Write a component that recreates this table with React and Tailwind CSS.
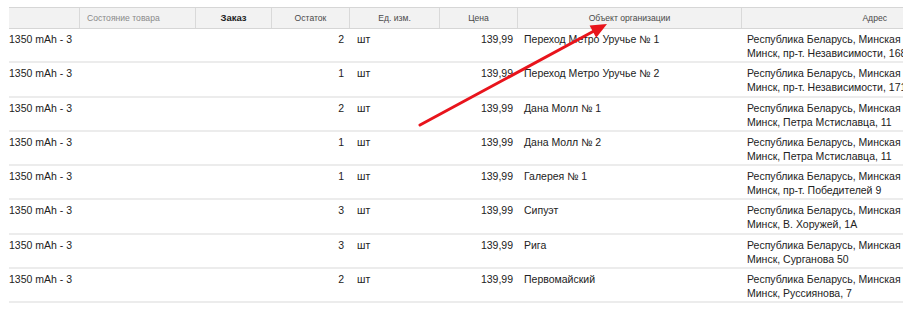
import React from "react";

const rows = [
  ["2", "Переход Метро Уручье № 1", "Минск, пр-т. Независимости, 168"],
  ["1", "Переход Метро Уручье № 2", "Минск, пр-т. Независимости, 171"],
  ["2", "Дана Молл № 1", "Минск, Петра Мстиславца, 11"],
  ["1", "Дана Молл № 2", "Минск, Петра Мстиславца, 11"],
  ["1", "Галерея № 1", "Минск, пр-т. Победителей 9"],
  ["3", "Сипуэт", "Минск, В. Хоружей, 1А"],
  ["3", "Рига", "Минск, Сурганова 50"],
  ["2", "Первомайский", "Минск, Руссиянова, 7"],
];

const cols = "grid grid-cols-[71px_116px_76px_78px_90px_78px_224px_240px]";

export default function App() {
  return (
    <div
      className="relative w-[903px] h-[320px] overflow-hidden bg-white text-[#222]"
      style={{ fontFamily: '"Liberation Sans", Arial, sans-serif' }}
    >
      <div className="pt-[7px] pl-[9px]">
        <div className={`${cols} w-max h-[22px] bg-[#f2f2f2] border-t border-b border-[#d6d6d6] text-[8.6px] leading-[20px] text-[#4a4a4a]`}>
          <div className="border-r border-[#d9d9d9]" />
          <div className="border-r border-[#d9d9d9] pl-[7px] text-[#8a8a8a] whitespace-nowrap">Состояние товара</div>
          <div className="border-r border-[#d9d9d9] text-center font-bold text-[#222] text-[9.5px]">Заказ</div>
          <div className="border-r border-[#d9d9d9] text-center">Остаток</div>
          <div className="border-r border-[#d9d9d9] text-center">Ед. изм.</div>
          <div className="border-r border-[#d9d9d9] text-center">Цена</div>
          <div className="border-r border-[#d9d9d9] text-center">Объект организации</div>
          <div className="text-right pr-[95px]">Адрес</div>
        </div>
        {rows.map((r, i) => (
          <div
            key={i}
            className={`${cols} w-max h-[34.25px] border-b-2 border-[#ececec] text-[10.5px] leading-[14px] pt-[3px]`}
          >
            <div className="whitespace-nowrap">1350 mAh - 3</div>
            <div />
            <div />
            <div className="text-right pr-[6px]">{r[0]}</div>
            <div className="pl-[7px]">шт</div>
            <div className="text-right pr-[5px]">139,99</div>
            <div className="pl-[6px] whitespace-nowrap">{r[1]}</div>
            <div className="pl-[5px] whitespace-nowrap">
              <div>Республика Беларусь, Минская обл.,</div>
              <div>{r[2]}</div>
            </div>
          </div>
        ))}
      </div>
      <svg className="absolute left-0 top-0 pointer-events-none" width="903" height="320">
        <line x1="420" y1="125" x2="594" y2="31" stroke="#e8141c" strokeWidth="3" strokeLinecap="round" />
        <polygon points="607,24 596.2,37.8 589.6,25.4" fill="#e8141c" />
      </svg>
    </div>
  );
}
